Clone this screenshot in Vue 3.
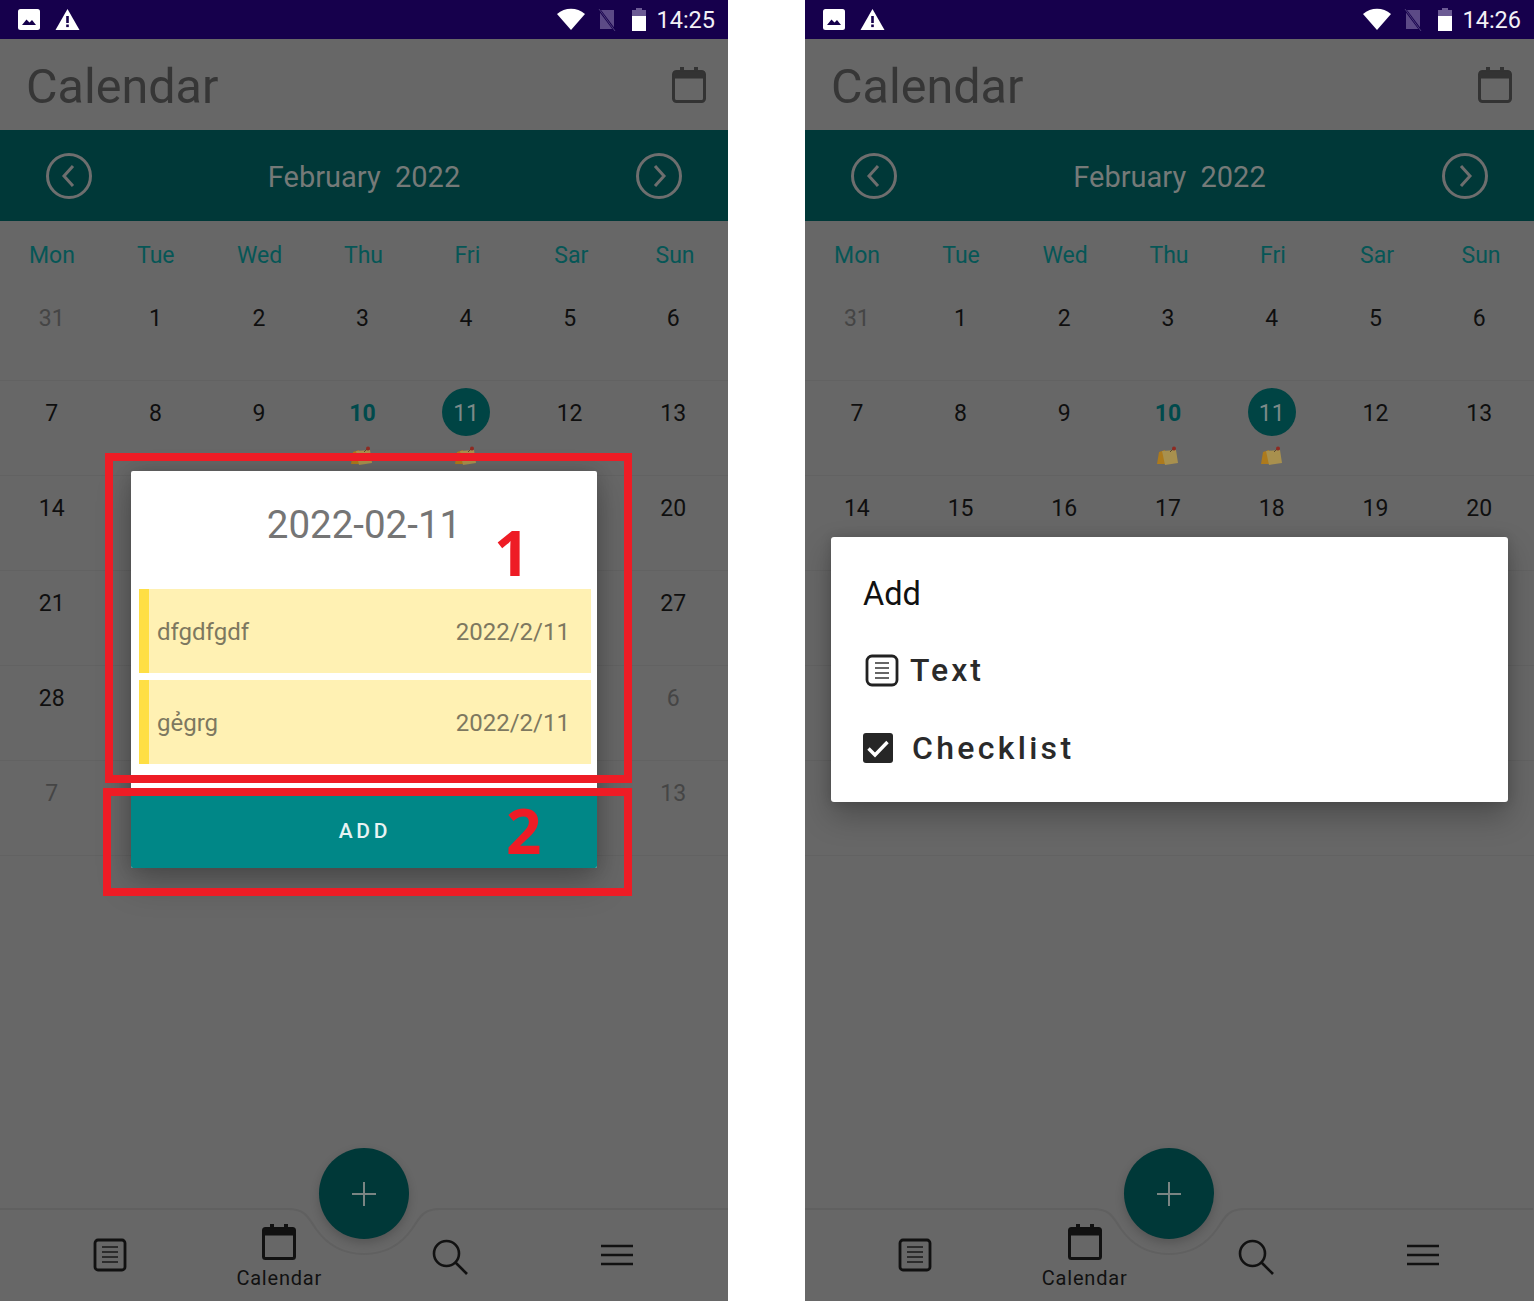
<template>
  <div class="page">
    <div v-for="p in phones" :key="p.time" class="phone" :class="p.kind">
      <div class="status">
        <svg class="st-img" width="24" height="23" viewBox="0 0 24 23"><rect x="1" y="1" width="22" height="21" rx="2.5" fill="#fff"/><path d="M5 17 L9.5 11.5 L12.5 14.5 L15 12 L19 17 Z" fill="#16004c"/></svg>
        <svg class="st-warn" width="25" height="23" viewBox="0 0 25 23"><path d="M12.5 1 L24.5 22 H0.5 Z" fill="#fff"/><rect x="11.2" y="8" width="2.6" height="7" fill="#16004c"/><rect x="11.2" y="16.5" width="2.6" height="2.6" fill="#16004c"/></svg>
        <span class="st-gap"></span>
        <svg width="28" height="23" viewBox="0 0 28 23"><path d="M14 22 L0 6 C8 -1 20 -1 28 6 Z" fill="#fff"/></svg>
        <svg class="st-sim" width="18" height="24" viewBox="0 0 18 24"><path d="M2 2 H16 V21 H2 Z" fill="#5c4a86"/><path d="M0 0 L18 24" stroke="#16004c" stroke-width="2.4"/><path d="M1 1 L17 23" stroke="#5c4a86" stroke-width="0.8"/></svg>
        <svg class="st-bat" width="16" height="24" viewBox="0 0 16 24"><rect x="5" y="0" width="6" height="3" fill="#6c5b94"/><rect x="1" y="2" width="14" height="6" fill="#6c5b94"/><rect x="1" y="8" width="14" height="15" fill="#fff"/></svg>
        <span class="time">{{ p.time }}</span>
      </div>

      <div class="head">
        <span class="head-title">Calendar</span>
        <svg width="34" height="36" viewBox="0 0 34 36"><path d="M8 0 H12 V5 H8 Z M22 0 H26 V5 H22 Z" fill="#333"/><rect x="1.5" y="4.5" width="31" height="30" rx="3" fill="none" stroke="#333" stroke-width="3"/><rect x="1.5" y="4.5" width="31" height="7" fill="#333"/></svg>
      </div>

      <div class="month">
        <svg width="46" height="46" viewBox="0 0 46 46"><circle cx="23" cy="23" r="21.5" fill="none" stroke="#6e6e6e" stroke-width="3"/><path d="M27 13 L18 23 L27 33" fill="none" stroke="#6e6e6e" stroke-width="3"/></svg>
        <span class="month-name">{{ monthLabel }}</span>
        <svg width="46" height="46" viewBox="0 0 46 46"><circle cx="23" cy="23" r="21.5" fill="none" stroke="#6e6e6e" stroke-width="3"/><path d="M19 13 L28 23 L19 33" fill="none" stroke="#6e6e6e" stroke-width="3"/></svg>
      </div>

      <div class="weekdays">
        <span v-for="w in weekdays" :key="w">{{ w }}</span>
      </div>

      <div class="cal">
        <div v-for="(week, i) in weeks" :key="i" class="week">
          <div v-for="d in week" :key="d.n + '-' + d.off" class="day">
            <span class="num" :class="{ off: d.off, today: d.n === 10 && !d.off, sel: d.n === 11 && !d.off }">{{ d.n }}</span>
            <svg v-if="(d.n === 10 || d.n === 11) && !d.off" class="note" width="22" height="20" viewBox="0 0 22 20">
              <path d="M2 6 L8 4 L8 18 L0 18 Z" fill="#ad7a1c"/>
              <path d="M5 5 L19 4 L21 17 L8 19 Z" fill="#a8904e"/>
              <path d="M13 6 L17 2" stroke="#5c4a30" stroke-width="1"/>
              <circle cx="17" cy="2.5" r="2" fill="#8f2a22"/>
            </svg>
          </div>
        </div>
      </div>

      <div class="nav">
        <svg class="notch" width="728" height="60" viewBox="0 0 728 60"><path d="M0 1 H288 C305 1 308 9 316 21 C328 38 345 46 364 46 C383 46 400 38 412 21 C420 9 423 1 440 1 H728" fill="none" stroke="#606060" stroke-width="2"/></svg>
        <div class="nav-item">
          <svg class="ic-list" width="34" height="34" viewBox="0 0 34 34"><rect x="2" y="2" width="30" height="30" rx="3" fill="none" stroke="#111" stroke-width="2.8"/><path d="M9 9 H25 M9 14 H25 M9 19 H25 M9 24 H25" stroke="#2c2c2c" stroke-width="2"/></svg>
        </div>
        <div class="nav-item cal-item">
          <svg width="34" height="36" viewBox="0 0 34 36"><path d="M8 0 H12 V5 H8 Z M22 0 H26 V5 H22 Z" fill="#111"/><rect x="1.5" y="4.5" width="31" height="30" rx="2" fill="none" stroke="#111" stroke-width="3"/><rect x="1.5" y="4.5" width="31" height="7" fill="#111"/></svg>
          <span class="nav-label">Calendar</span>
        </div>
        <div class="nav-item">
          <svg class="ic-search" width="36" height="36" viewBox="0 0 36 36"><circle cx="14.5" cy="14.5" r="12.5" fill="none" stroke="#111" stroke-width="2.6"/><path d="M23.5 23.5 L35 35" stroke="#111" stroke-width="2.6"/></svg>
        </div>
        <div class="nav-item">
          <svg class="ic-menu" width="32" height="22" viewBox="0 0 32 22"><path d="M0 2 H32 M0 11 H32 M0 20 H32" stroke="#111" stroke-width="2.6"/></svg>
        </div>
      </div>

      <div class="fab">
        <svg width="24" height="24" viewBox="0 0 24 24"><path d="M12 0 V24 M0 12 H24" stroke="#7a8583" stroke-width="2"/></svg>
      </div>

      <!-- day dialog with the annotation frames -->
      <template v-if="p.kind === 'left'">
        <div class="day-card">
          <div class="day-title">2022-02-11</div>
          <div class="entries">
            <div v-for="e in entries" :key="e" class="entry">
              <span class="entry-name">{{ e }}</span>
              <span>2022/2/11</span>
            </div>
          </div>
          <div class="add-btn">ADD</div>
        </div>
        <div class="mark mark-1"></div>
        <div class="mark mark-2"></div>
        <span class="mark-num num-1">1</span>
        <span class="mark-num num-2">2</span>
      </template>

      <!-- add menu -->
      <div v-else class="add-card">
        <div class="add-title">Add</div>
        <div class="add-row row-text">
          <svg width="34" height="33" viewBox="0 0 34 33"><rect x="2" y="2" width="30" height="29" rx="5" fill="none" stroke="#222" stroke-width="2.8"/><path d="M10 9 H24 M10 14 H24 M10 19 H24 M10 24 H24" stroke="#666" stroke-width="2"/></svg>
          <span>Text</span>
        </div>
        <div class="add-row row-check">
          <svg width="30" height="30" viewBox="0 0 30 30"><rect width="30" height="30" rx="3" fill="#262626"/><path d="M5.5 15.5 L12 22 L24.5 9" fill="none" stroke="#fff" stroke-width="3.4"/></svg>
          <span>Checklist</span>
        </div>
      </div>
    </div>
  </div>
</template>

<script setup>
const phones = [
  { time: '14:25', kind: 'left' },
  { time: '14:26', kind: 'right' },
]
const monthLabel = 'February\u00a0\u00a02022'
const weekdays = ['Mon', 'Tue', 'Wed', 'Thu', 'Fri', 'Sar', 'Sun']
const entries = ['dfgdfgdf', 'gẻgrg']

// Feb 2022, monday first, with the grey days of the months around it
const cells = [{ n: 31, off: true }]
for (let n = 1; n <= 28; n++) cells.push({ n, off: false })
for (let n = 1; n <= 13; n++) cells.push({ n, off: true })
const weeks = []
for (let i = 0; i < 6; i++) weeks.push(cells.slice(i * 7, i * 7 + 7))
</script>

<style>
body { margin: 0; background: #fff; }
</style>

<style scoped>
.page {
  display: flex; gap: 77px; width: 1534px; height: 1301px;
  font-family: Roboto, "Liberation Sans", sans-serif;
}
.phone {
  position: relative; width: 728px; height: 1301px; overflow: hidden; flex: none;
  display: flex; flex-direction: column; background: #676767;
}
.phone.right { width: 729px; }
.status {
  height: 39px; flex: none; background: #16004c; display: flex; align-items: center;
  padding: 0 13px 0 17px; box-sizing: border-box;
}
.st-warn { margin-left: 14px; }
.st-gap { flex: 1; }
.st-sim { margin-left: 13px; }
.st-bat { margin-left: 15px; }
.time { margin-left: 9px; color: #f2f0f6; font-size: 23.5px; }
.head {
  height: 91px; flex: none; display: flex; align-items: center; justify-content: space-between;
  padding: 0 22px 0 26px; box-sizing: border-box;
}
.head-title { font-size: 48.5px; color: #363636; padding-top: 4px; }
.month {
  height: 91px; flex: none; background: #003838; display: flex; align-items: center;
  justify-content: space-between; padding: 0 46px; box-sizing: border-box;
}
.month-name { font-size: 29px; color: #757a78; padding-top: 2px; }
.weekdays {
  height: 65px; flex: none; display: grid; grid-template-columns: repeat(7, 1fr);
  align-items: center; text-align: center; font-size: 23px; color: #065656; padding: 3px 1px 0 0;
  box-sizing: border-box;
}
.week {
  height: 95px; box-sizing: border-box; display: grid; grid-template-columns: repeat(7, 1fr);
  border-bottom: 1px solid #626262; padding-right: 3px;
}
.day { display: flex; flex-direction: column; align-items: center; padding-top: 7px; }
.num {
  width: 48px; height: 48px; flex: none; border-radius: 50%; display: flex; align-items: center;
  justify-content: center; font-size: 23px; color: #0f0f0f; padding-top: 3px; box-sizing: border-box;
}
.num.off { color: #454545; }
.num.today { color: #004a4c; font-weight: 700; }
.num.sel { background: #004444; color: #7b8a88; }
.note { margin-top: 10px; }
.nav {
  position: relative; margin-top: auto; height: 92px; flex: none; box-sizing: border-box;
  display: grid; grid-template-columns: repeat(4, 1fr); padding: 0 25px;
}
.notch { position: absolute; left: 0; top: -1px; }
.nav-item { display: flex; flex-direction: column; align-items: center; }
.ic-list { margin-top: 29px; }
.cal-item { padding-top: 15px; }
.nav-label { font-size: 20px; color: #111; letter-spacing: 0.8px; margin-top: 6px; line-height: 24px; }
.ic-search { margin-top: 30px; margin-left: 3px; }
.ic-menu { margin-top: 35px; margin-left: -2px; }
.fab {
  position: absolute; left: 319px; top: 1148px; width: 90px; height: 91px; border-radius: 50%;
  background: #003838; display: flex; align-items: center; justify-content: center;
  box-shadow: 0 4px 10px rgba(0, 0, 0, 0.18);
}
.day-card {
  position: absolute; left: 131px; top: 471px; width: 466px; height: 397px; border-radius: 2px;
  background: #fff; display: flex; flex-direction: column;
  box-shadow: 0 14px 34px rgba(0, 0, 0, 0.26), 0 0 18px rgba(0, 0, 0, 0.14);
}
.day-title {
  height: 118px; flex: none; box-sizing: border-box; padding-top: 28px; text-align: center;
  font-size: 38.5px; line-height: 52px; color: #757575;
}
.entries { display: flex; flex-direction: column; gap: 7px; padding: 0 6px 0 8px; }
.entry {
  height: 84px; box-sizing: border-box; background: #fff1b3; border-left: 10px solid #ffdf44;
  display: flex; align-items: center; justify-content: space-between; padding: 2px 21px 0 8px;
  font-size: 24px; color: #7d7860;
}
.add-btn {
  margin-top: auto; height: 72px; flex: none; background: #008787; border-radius: 0 0 2px 2px;
  display: flex; align-items: center; justify-content: center; color: #e8f3f3;
  font-size: 21px; font-weight: 500; letter-spacing: 3.8px; padding: 0 0 3px 2px; box-sizing: border-box;
}
.mark { position: absolute; box-sizing: border-box; border: 8px solid #ee1c25; }
.mark-1 { left: 105px; top: 453px; width: 527px; height: 330px; }
.mark-2 { left: 103px; top: 788px; width: 529px; height: 108px; }
.mark-num {
  position: absolute; font-family: "Open Sans", sans-serif; font-weight: 700; font-size: 62px;
  line-height: 64px; color: #ee1c25;
}
.num-1 { left: 494px; top: 520px; }
.num-2 { left: 506px; top: 798px; }
.add-card {
  position: absolute; left: 26px; top: 537px; width: 677px; height: 265px; border-radius: 3px;
  background: #fff; box-shadow: 0 14px 30px rgba(0, 0, 0, 0.26), 0 0 12px rgba(0, 0, 0, 0.14);
  box-sizing: border-box; padding: 0 32px; display: flex; flex-direction: column;
}
.add-title { font-size: 32.5px; line-height: 36px; color: #111; margin-top: 39px; }
.add-row {
  display: flex; align-items: center; font-size: 32px; font-weight: 500; color: #2a2a2a;
  letter-spacing: 3px;
}
.row-text { margin-top: 38px; height: 40px; padding-left: 2px; gap: 11px; }
.row-check { margin-top: 38px; height: 40px; gap: 19px; letter-spacing: 3.3px; }
</style>
